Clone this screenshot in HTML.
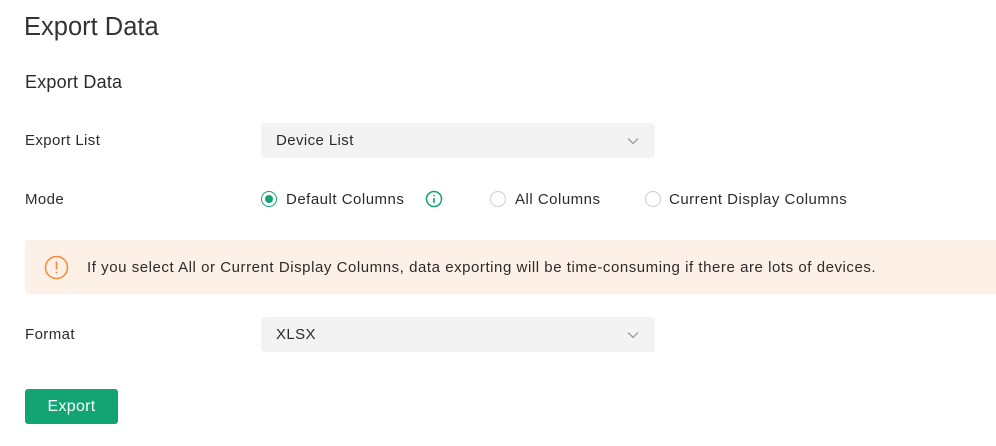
<!DOCTYPE html><html><head><style>
body{margin:0;background:#fff;font-family:"Liberation Sans",sans-serif;color:#2b2b2b;width:996px;height:446px;overflow:hidden;position:relative}
.a{position:absolute}
.lbl{font-size:15px;left:25px;letter-spacing:0.4px}
.sel{left:261px;width:394px;height:35px;background:#f3f3f3;border-radius:4px;font-size:15px;line-height:35px;box-sizing:border-box;padding-left:15px;letter-spacing:0.4px}
.sel svg{position:absolute;right:16px;top:14px}
.r{width:16px;height:16px;border:1px solid #ccc;border-radius:50%;box-sizing:border-box;top:191px}
.rt{font-size:15px;top:191px;letter-spacing:0.5px}
</style></head><body>
<div class="a" style="left:24px;top:13px;font-size:25.5px;color:#333">Export Data</div>
<div class="a" style="left:25px;top:72px;font-size:18px;letter-spacing:0.2px">Export Data</div>
<div class="a lbl" style="top:132px">Export List</div>
<div class="a sel" style="top:123px">Device List<svg width="12" height="8"><path d="M1 1.5l5 5 5-5" stroke="#999" fill="none" stroke-width="1.3"/></svg></div>
<div class="a lbl" style="top:191px">Mode</div>
<div class="a r" style="left:261px;border:1.5px solid #12a472"><div style="width:8px;height:8px;background:#12a472;border-radius:50%;margin:2.5px"></div></div>
<div class="a rt" style="left:286px">Default Columns</div>
<svg class="a" style="left:425px;top:190px" width="18" height="18"><circle cx="9" cy="9" r="7.5" stroke="#12a472" stroke-width="1.5" fill="none"/><path d="M9 8v5M9 5v1.2" stroke="#12a472" stroke-width="1.6"/></svg>
<div class="a r" style="left:490px"></div>
<div class="a rt" style="left:515px">All Columns</div>
<div class="a r" style="left:645px"></div>
<div class="a rt" style="left:669px">Current Display Columns</div>
<div class="a" style="left:25px;top:240px;width:980px;height:54px;background:#fdf0e7;border-radius:4px"></div>
<svg class="a" style="left:44px;top:255px" width="25" height="25"><circle cx="12.5" cy="12.5" r="11" stroke="#f58a32" stroke-width="1.5" fill="none"/><path d="M12.5 6.5v8M12.5 16.8v1.5" stroke="#f58a32" stroke-width="1.6"/></svg>
<div class="a" style="left:87px;top:259px;font-size:15px;letter-spacing:0.55px;white-space:nowrap">If you select All or Current Display Columns, data exporting will be time-consuming if there are lots of devices.</div>
<div class="a lbl" style="top:326px">Format</div>
<div class="a sel" style="top:317px">XLSX<svg width="12" height="8"><path d="M1 1.5l5 5 5-5" stroke="#999" fill="none" stroke-width="1.3"/></svg></div>
<div class="a" style="left:25px;top:389px;width:93px;height:35px;background:#12a472;border-radius:3px;color:#fff;font-size:16px;line-height:36px;text-align:center;letter-spacing:0.3px">Export</div>
</body></html>
